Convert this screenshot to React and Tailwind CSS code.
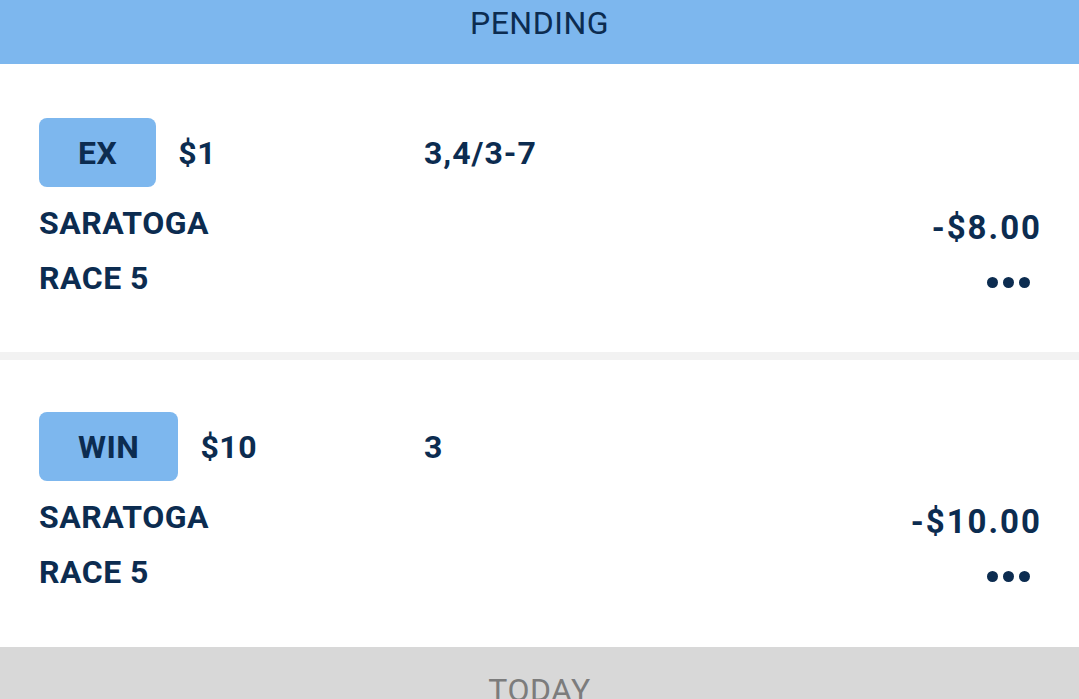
const navy = "text-[#0c2c50]";

function Dots() {
	return (
		<div className="flex gap-[5px] mr-[10px] mt-[18px]">
			<span className="w-[11px] h-[11px] rounded-full bg-[#0c2c50]" />
			<span className="w-[11px] h-[11px] rounded-full bg-[#0c2c50]" />
			<span className="w-[11px] h-[11px] rounded-full bg-[#0c2c50]" />
		</div>
	);
}

function BetCard({ type, stake, selection, track, race, amount, first }) {
	return (
		<div className={first ? "bg-white h-[288px] pt-[54px] px-[39px]" : "bg-white h-[287px] pt-[52px] px-[39px]"}>
			<div className="flex items-center">
				<div className="w-[385px] flex items-center">
					<div className="h-[69px] px-[39px] rounded-[8px] bg-[#7db7ee] flex items-center">
						<span className={`${navy} text-[32px] font-bold leading-[38px] tracking-[0.5px]`}>{type}</span>
					</div>
					<span className={`${navy} ml-[22px] text-[32px] font-bold leading-[38px] tracking-[0.5px]`}>{stake}</span>
				</div>
				<span className={`${navy} text-[32px] font-bold leading-[38px] tracking-[1px]`}>{selection}</span>
			</div>
			<div className="flex justify-between items-start mt-[17px]">
				<span className={`${navy} text-[32px] font-bold leading-[38px] tracking-[0.5px]`}>{track}</span>
				<span className={`${navy} mt-[5px] -mr-[2px] text-[33px] font-bold leading-[38px] tracking-[2px]`}>{amount}</span>
			</div>
			<div className="flex justify-between items-start mt-[12px]">
				<span className={`${navy} text-[32px] font-bold leading-[38px] tracking-[0.5px]`}>{race}</span>
				<Dots />
			</div>
		</div>
	);
}

export default function App() {
	return (
		<div className="w-[1079px] h-[699px] overflow-hidden bg-white" style={{ fontFamily: "Roboto, 'Noto Sans', sans-serif" }}>
			<div className="h-[64px] bg-[#7db7ee] pt-[4px] text-center">
				<span className={`${navy} text-[32px] leading-[38px] tracking-[0.5px]`}>PENDING</span>
			</div>
			<BetCard first type="EX" stake="$1" selection="3,4/3-7" track="SARATOGA" race="RACE 5" amount="-$8.00" />
			<div className="h-[8px] bg-[#f2f2f2]" />
			<BetCard type="WIN" stake="$10" selection="3" track="SARATOGA" race="RACE 5" amount="-$10.00" />
			<div className="h-[60px] bg-[#d8d8d8] pt-[24px] text-center">
				<span className="text-[#7c7c7c] text-[32px] leading-[38px] tracking-[0.5px]">TODAY</span>
			</div>
		</div>
	);
}
